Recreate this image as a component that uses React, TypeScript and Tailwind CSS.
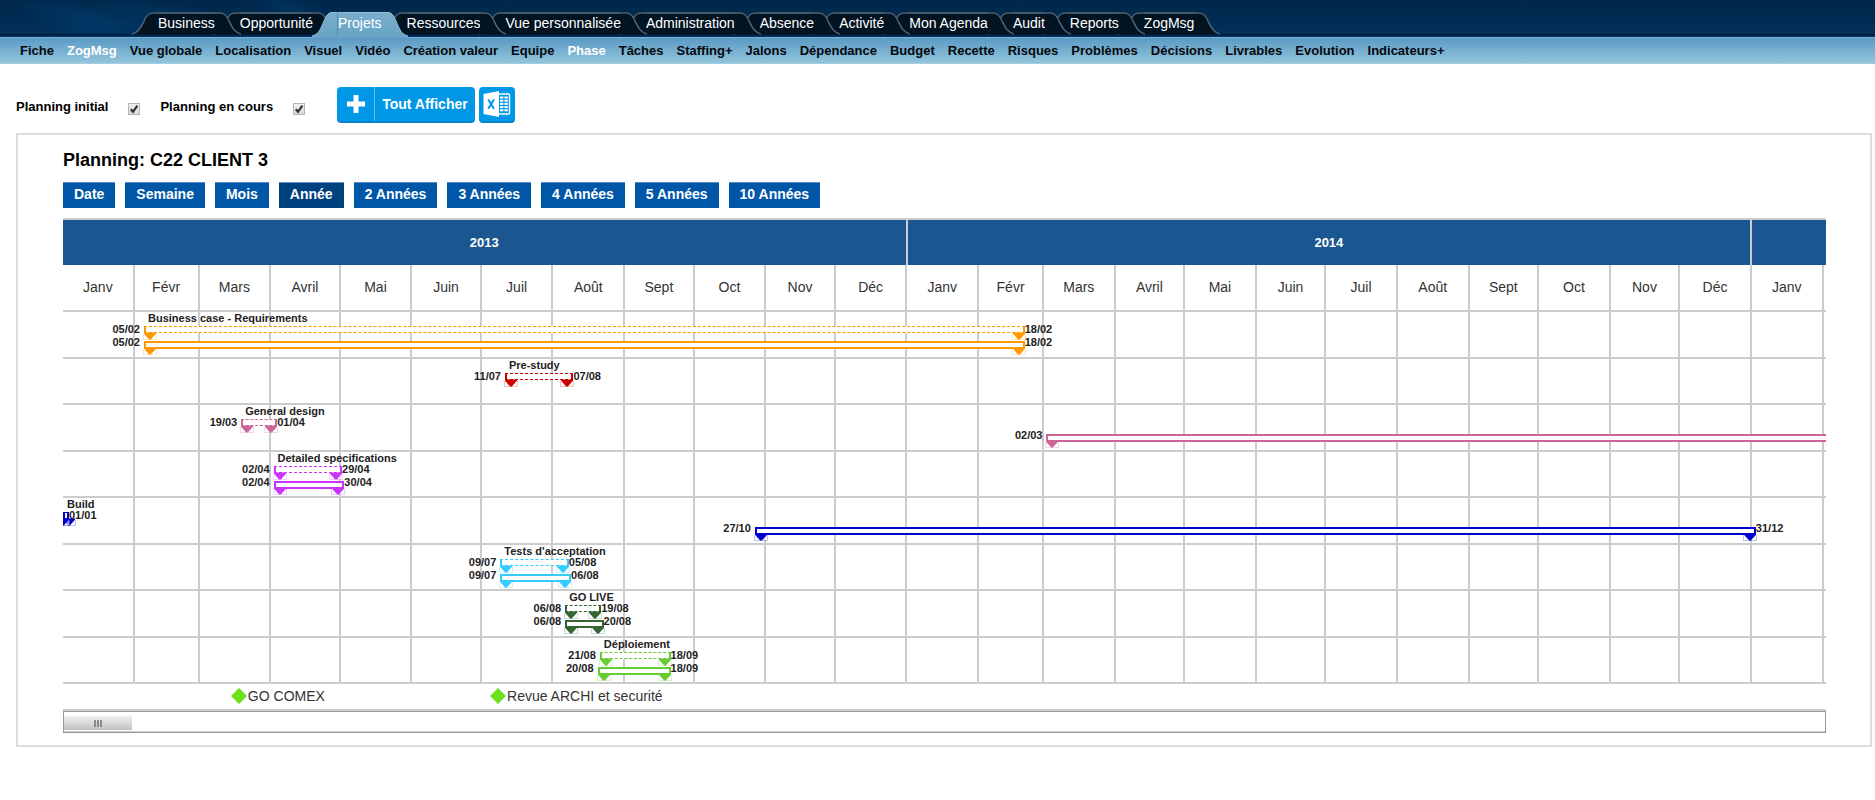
import React from "react";

const TABS = [
  "Business", "Opportunité", "Projets", "Ressources", "Vue personnalisée", "Administration",
  "Absence", "Activité", "Mon Agenda", "Audit", "Reports", "ZogMsg",
];
const ACTIVE_TAB = "Projets";

const LINKS = [
  "Fiche", "ZogMsg", "Vue globale", "Localisation", "Visuel", "Vidéo", "Création valeur", "Equipe",
  "Phase", "Tâches", "Staffing+", "Jalons", "Dépendance", "Budget", "Recette", "Risques",
  "Problèmes", "Décisions", "Livrables", "Evolution", "Indicateurs+",
];
const ACTIVE_LINKS = ["ZogMsg", "Phase"];

const SCALES = ["Date", "Semaine", "Mois", "Année", "2 Années", "3 Années", "4 Années", "5 Années", "10 Années"];

const MONTH_NAMES = ["Janv", "Févr", "Mars", "Avril", "Mai", "Juin", "Juil", "Août", "Sept", "Oct", "Nov", "Déc"];
const MONTH_DAYS = [31, 28, 31, 30, 31, 30, 31, 31, 30, 31, 30, 31];
const MONTHS = Array.from({ length: 25 }, (_, i) => ({ name: MONTH_NAMES[i % 12], days: MONTH_DAYS[i % 12] }));

// Number of days shown in the window, counted from 01/01/2013.
const SPAN = 761.9;
const pct = (days: number) => `${(days / SPAN) * 100}%`;

type Bar = { start: number; end: number; from?: string; to?: string };
type Phase = { name: string; color: string; planned: Bar; actual?: Bar };

const PHASES: Phase[] = [
  {
    name: "Business case - Requirements", color: "#ff9900",
    planned: { start: 35, end: 413, from: "05/02", to: "18/02" },
    actual: { start: 35, end: 413, from: "05/02", to: "18/02" },
  },
  { name: "Pre-study", color: "#cc0000", planned: { start: 191, end: 218, from: "11/07", to: "07/08" } },
  {
    name: "General design", color: "#cc6699",
    planned: { start: 77, end: 90, from: "19/03", to: "01/04" },
    actual: { start: 425, end: 780, from: "02/03" },
  },
  {
    name: "Detailed specifications", color: "#cc33ff",
    planned: { start: 91, end: 118, from: "02/04", to: "29/04" },
    actual: { start: 91, end: 119, from: "02/04", to: "30/04" },
  },
  {
    name: "Build", color: "#0000cc",
    planned: { start: 0, end: 0, to: "01/01" },
    actual: { start: 299, end: 729, from: "27/10", to: "31/12" },
  },
  {
    name: "Tests d'acceptation", color: "#33ccff",
    planned: { start: 189, end: 216, from: "09/07", to: "05/08" },
    actual: { start: 189, end: 217, from: "09/07", to: "06/08" },
  },
  {
    name: "GO LIVE", color: "#336633",
    planned: { start: 217, end: 230, from: "06/08", to: "19/08" },
    actual: { start: 217, end: 231, from: "06/08", to: "20/08" },
  },
  {
    name: "Déploiement", color: "#66cc33",
    planned: { start: 232, end: 260, from: "21/08", to: "18/09" },
    actual: { start: 231, end: 260, from: "20/08", to: "18/09" },
  },
];

const MILESTONES = [
  { name: "GO COMEX", day: 76 },
  { name: "Revue ARCHI et securité", day: 188 },
];

function TabCap({ active, flip }: { active: boolean; flip?: boolean }) {
  return (
    <svg
      viewBox="0 0 26 26"
      className={`h-[26px] w-[26px] shrink-0 ${flip ? "-scale-x-100" : ""}`}
      aria-hidden="true"
    >
      {active ? (
        <>
          <defs>
            <linearGradient id="activeTab" x1="0" x2="0" y1="0" y2="1">
              <stop offset="0" stopColor="#79aecb" />
              <stop offset="1" stopColor="#66a3c6" />
            </linearGradient>
          </defs>
          <path d="M0 26 V24 C8 22 9 15 12 9 C14 4 16 0 21 0 H26 V26 Z" fill="url(#activeTab)" />
          <path d="M0 24 C8 22 9 15 12 9 C14 4 16 0.5 21 0.5 H26" fill="none" stroke="#8fbdd6" />
        </>
      ) : (
        <>
          <path d="M1 22 C7 20 9 15 12 9 C14 4 16 0 21 0 H26 V22 Z" fill="#021322" />
          <path d="M0 22 C7 20 9 15 12 9 C14 4 16 1 21 1 H26" fill="none" stroke="#4d6275" strokeWidth="1.6" />
        </>
      )}
    </svg>
  );
}

function Header() {
  return (
    <header>
      <div className="relative h-[37px] bg-linear-to-b from-[#00274a] to-[#003059] pt-3">
        <svg
          viewBox="0 0 330 34"
          preserveAspectRatio="none"
          className="absolute top-0 left-0 h-[34px] w-[330px]"
          aria-hidden="true"
        >
          <defs>
            <linearGradient id="ray" x1="0" x2="1" y1="0" y2="0">
              <stop offset="0" stopColor="#0a4a86" stopOpacity="0" />
              <stop offset="0.5" stopColor="#0a4a86" stopOpacity="0.35" />
              <stop offset="1" stopColor="#0a4a86" stopOpacity="0" />
            </linearGradient>
            <filter id="soft">
              <feGaussianBlur stdDeviation="4" />
            </filter>
          </defs>
          <g fill="url(#ray)" filter="url(#soft)">
            <path d="M0 0 L50 0 L190 34 L70 34 Z" />
            <path d="M70 0 L120 0 L300 34 L170 30 Z" />
            <path d="M240 0 L290 0 L330 12 L330 22 Z" />
          </g>
        </svg>
        <div className="absolute bottom-0 left-0 h-[3px] w-full border-t border-[#001a35] bg-[#002c5a]" />
        <nav aria-label="Modules" className="relative pl-[159px]">
          <ul className="flex">
            {TABS.map((tab, i) => {
              const active = tab === ACTIVE_TAB;
              return (
                <li
                  key={tab}
                  className="relative -ml-[27px] flex h-[26px]"
                  style={{ zIndex: active ? 20 : TABS.length - i }}
                >
                  <TabCap active={active} />
                  <a
                    href="#"
                    className={
                      active
                        ? "h-[26px] border-t border-[#8fbdd6] bg-linear-to-b from-[#79aecb] to-[#66a3c6] text-[14px] leading-5 whitespace-nowrap text-white shadow-[1px_0_0_#5b93b7,-1px_0_0_#5b93b7]"
                        : "h-[22px] border-t-2 border-[#43586b] bg-[#021322] text-[14px] leading-[18px] whitespace-nowrap text-white"
                    }
                  >
                    {tab}
                  </a>
                  <TabCap active={active} flip />
                </li>
              );
            })}
          </ul>
        </nav>
      </div>
      <nav
        aria-label="Projet"
        className="h-[27px] border-t border-b border-t-[#7fb3d6] border-b-[#a3cfe2] bg-linear-to-b from-[#5a9ac4] to-[#93c5dc] pl-5"
      >
        <ul className="flex gap-[13px]">
          {LINKS.map((link) => (
            <li key={link}>
              <a
                href="#"
                className={`text-[13px] leading-[25px] font-bold whitespace-nowrap ${
                  ACTIVE_LINKS.includes(link) ? "text-white" : "text-[#05080c]"
                }`}
              >
                {link}
              </a>
            </li>
          ))}
        </ul>
      </nav>
    </header>
  );
}

function Check({ label }: { label: string }) {
  return (
    <label className="flex items-center gap-5 text-[13px] font-bold text-black">
      {label}
      <span className="relative mt-1 h-3 w-3">
        <input
          type="checkbox"
          defaultChecked
          className="peer block h-3 w-3 appearance-none border border-[#b5b5b5] bg-linear-to-b from-[#f0f0f0] to-[#d8d8d8]"
        />
        <svg
          viewBox="0 0 12 12"
          className="pointer-events-none absolute top-0 left-0 hidden h-3 w-3 peer-checked:block"
          aria-hidden="true"
        >
          <path d="M2.8 6.2 L5 8.8 L9.4 2.6" fill="none" stroke="#333" strokeWidth="2.2" />
        </svg>
      </span>
    </label>
  );
}

function ExcelIcon() {
  return (
    <svg viewBox="0 0 28 28" className="h-7 w-7" aria-hidden="true">
      <rect x="15" y="4" width="11.5" height="20" rx="1" fill="none" stroke="#fff" strokeWidth="1.4" />
      <g fill="#fff">
        <rect x="17" y="6.5" width="3.4" height="2" />
        <rect x="21.4" y="6.5" width="3.4" height="2" />
        <rect x="17" y="9.7" width="3.4" height="2" />
        <rect x="21.4" y="9.7" width="3.4" height="2" />
        <rect x="17" y="12.9" width="3.4" height="2" />
        <rect x="21.4" y="12.9" width="3.4" height="2" />
        <rect x="17" y="16.1" width="3.4" height="2" />
        <rect x="21.4" y="16.1" width="3.4" height="2" />
        <rect x="17" y="19.3" width="3.4" height="2" />
        <rect x="21.4" y="19.3" width="3.4" height="2" />
      </g>
      <path d="M0.5 4 L16 1 V27 L0.5 24 Z" fill="#fff" />
      <path d="M5.2 9.5 L11 18.8 M11 9.5 L5.2 18.8" stroke="#0097e6" strokeWidth="2" fill="none" />
    </svg>
  );
}

function Toolbar() {
  return (
    <div className="flex h-9 items-center pl-4">
      <div className="flex items-center gap-5 pt-1">
        <Check label="Planning initial" />
        <Check label="Planning en cours" />
      </div>
      <button
        type="button"
        className="ml-8 flex h-9 items-center rounded-[4px] border-b-2 border-[#0a83cd] bg-[#0097e6] text-[14px] font-bold text-white"
      >
        <span className="flex h-full w-[38px] items-center justify-center border-r border-[#5cbcf0]">
          <svg viewBox="0 0 18 18" className="h-[18px] w-[18px]" aria-hidden="true">
            <path d="M9 0 V18 M0 9 H18" stroke="#fff" strokeWidth="5" />
          </svg>
        </span>
        <span className="px-[7px]">Tout Afficher</span>
      </button>
      <button
        type="button"
        aria-label="Exporter vers Excel"
        className="ml-1 flex h-9 w-9 items-center justify-center rounded-[4px] border-b-2 border-[#0a83cd] bg-[#0097e6]"
      >
        <ExcelIcon />
      </button>
    </div>
  );
}

function Marker({ color, side }: { color: string; side: "left" | "right" }) {
  return (
    <svg
      viewBox="0 0 14 8"
      className={`absolute top-full h-2 w-[14px] ${side === "left" ? "-left-[3px]" : "-right-[3px]"}`}
      aria-hidden="true"
    >
      <path d="M0.5 2 V7.5 H13.5 V2" fill="#fff" fillOpacity="0.6" stroke={color} strokeOpacity="0.25" />
      <path d="M1 0.5 H13 V1.8 L7.8 7.6 H6.2 L1 1.8 Z" fill={color} />
    </svg>
  );
}

function PhaseBar({ bar, color, dashed }: { bar: Bar; color: string; dashed?: boolean }) {
  const dateTop = dashed ? "-top-[3px]" : "-top-[6px]";
  return (
    <div
      className={`absolute bg-white ${
        dashed ? "top-[14px] h-[7px] border-x-2 border-y [border-style:dashed_solid]" : "top-[29px] h-2 border-2"
      }`}
      style={{
        left: pct(bar.start),
        width: `calc(${pct(bar.end - bar.start)} + 6px)`,
        borderColor: color,
      }}
    >
      <Marker color={color} side="left" />
      <Marker color={color} side="right" />
      {bar.from && (
        <span className={`absolute right-full mr-[6px] text-[11px] leading-[11px] font-bold text-[#222] ${dateTop}`}>
          {bar.from}
        </span>
      )}
      {bar.to && (
        <span className={`absolute left-full ml-[2px] text-[11px] leading-[11px] font-bold text-[#222] ${dateTop}`}>
          {bar.to}
        </span>
      )}
    </div>
  );
}

function Gantt() {
  return (
    <div className="overflow-hidden border-t-2 border-[#ccc]">
      <div className="flex h-[45px] bg-[#1a5790] text-[13px] font-bold text-white">
        {["2013", "2014"].map((year) => (
          <div
            key={year}
            className="flex items-center justify-center border-r-2 border-[#ccc]"
            style={{ width: pct(365) }}
          >
            {year}
          </div>
        ))}
      </div>
      <div className="grid">
        <div className="col-start-1 row-start-1 flex">
          {MONTHS.map((month, i) => (
            <div
              key={i}
              className="shrink-0 border-r-2 border-[#ccc] text-center text-[14px] leading-[45px] text-[#333]"
              style={{ width: pct(month.days) }}
            >
              {month.name}
            </div>
          ))}
        </div>
        <div className="col-start-1 row-start-1 pt-[45px]">
          <div className="flex h-[374px] flex-col border-t-2 border-[#ccc]">
            {PHASES.map((phase) => (
              <div key={phase.name} className="relative flex-1 border-b-2 border-[#ccc]">
                <PhaseBar bar={phase.planned} color={phase.color} dashed />
                {phase.actual && <PhaseBar bar={phase.actual} color={phase.color} />}
                <span
                  className="absolute top-0 ml-1 text-[11px] leading-3 font-bold whitespace-nowrap text-[#222]"
                  style={{ left: pct(phase.planned.start) }}
                >
                  {phase.name}
                </span>
              </div>
            ))}
          </div>
        </div>
      </div>
      <div className="relative h-[25px]">
        {MILESTONES.map((m) => (
          <div
            key={m.name}
            className="absolute top-1 -ml-2 flex items-center gap-px text-[14px] leading-4 whitespace-nowrap text-[#333]"
            style={{ left: pct(m.day) }}
          >
            <svg viewBox="0 0 16 16" className="h-4 w-4" aria-hidden="true">
              <path d="M8 0 L16 8 L8 16 L0 8 Z" fill="#6be01c" />
            </svg>
            {m.name}
          </div>
        ))}
      </div>
    </div>
  );
}

function ScrollBar() {
  return (
    <div className="border-t-2 border-[#ccc]">
      <div
        role="scrollbar"
        aria-label="Défilement du planning"
        aria-controls="planning"
        aria-valuenow={0}
        aria-orientation="horizontal"
        className="flex h-[22px] items-end border border-[#999] pb-[2px] shadow-[inset_0_-1px_0_#ccc]"
      >
        <div className="flex h-[14px] w-[68px] items-center justify-center gap-px bg-linear-to-b from-[#f2f2f2] to-[#c2c2c4]">
          <span className="h-[7px] w-[2px] bg-[#8a8a8a]" />
          <span className="h-[7px] w-[2px] bg-[#8a8a8a]" />
          <span className="h-[7px] w-[2px] bg-[#8a8a8a]" />
        </div>
      </div>
    </div>
  );
}

export default function App() {
  return (
    <div className="min-h-screen overflow-x-hidden bg-white font-['Liberation_Sans',Arial,sans-serif]">
      <Header />
      <main className="pt-[23px]">
        <Toolbar />
        <section className="mt-[10px] mr-[3px] ml-4 border-2 border-[#ddd] pt-[13px] pr-[44px] pb-3 pl-[45px]">
          <h1 className="text-[18px] leading-6 font-bold text-black">Planning: C22 CLIENT 3</h1>
          <div className="mt-[10px] flex gap-[10px]">
            {SCALES.map((scale) => (
              <button
                key={scale}
                type="button"
                aria-pressed={scale === "Année"}
                className={`h-[26px] border-t border-[#5a90c4] px-[11px] pb-[2px] text-[14px] font-bold text-white ${
                  scale === "Année" ? "bg-[#00417f]" : "bg-[#0057a8]"
                }`}
              >
                {scale}
              </button>
            ))}
          </div>
          <div id="planning" className="mt-[10px]">
            <Gantt />
            <ScrollBar />
          </div>
        </section>
      </main>
    </div>
  );
}
